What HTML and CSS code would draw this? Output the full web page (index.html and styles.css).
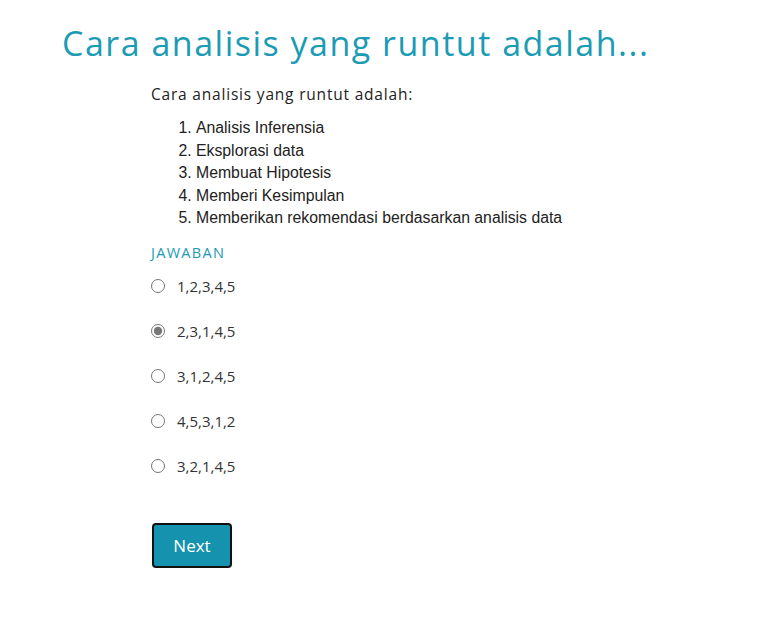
FILE: index.html
```html
<!DOCTYPE html>
<html lang="id">
<head>
<meta charset="utf-8">
<title>Soal</title>
<link rel="stylesheet" href="styles.css">
</head>
<body>
<main class="page">
  <h1 class="title">Cara analisis yang runtut adalah...</h1>
  <section class="question">
    <p class="prompt">Cara analisis yang runtut adalah:</p>
    <ol class="steps">
      <li>Analisis Inferensia</li>
      <li>Eksplorasi data</li>
      <li>Membuat Hipotesis</li>
      <li>Memberi Kesimpulan</li>
      <li>Memberikan rekomendasi berdasarkan analisis data</li>
    </ol>
    <div class="answer-label">JAWABAN</div>
    <form class="options">
      <label class="option"><input type="radio" name="a"><span>1,2,3,4,5</span></label>
      <label class="option"><input type="radio" name="a" checked><span>2,3,1,4,5</span></label>
      <label class="option"><input type="radio" name="a"><span>3,1,2,4,5</span></label>
      <label class="option"><input type="radio" name="a"><span>4,5,3,1,2</span></label>
      <label class="option"><input type="radio" name="a"><span>3,2,1,4,5</span></label>
    </form>
    <button class="next" type="button">Next</button>
  </section>
</main>
</body>
</html>
```

FILE: styles.css
```css
* { box-sizing: border-box; }
body {
  margin: 0;
  background: #fff;
  font-family: "Open Sans", "Noto Sans", sans-serif;
  color: #222;
}
.page {
  padding: 19px 0 0 62px;
}
.title {
  margin: 0;
  font-family: "Open Sans", sans-serif;
  font-weight: 500;
  font-size: 34px;
  line-height: 48px;
  color: #1b9bb4;
  letter-spacing: 1.5px;
}
.question {
  padding-left: 89px;
  padding-top: 16px;
}
.prompt {
  margin: 0;
  font-size: 15.5px;
  line-height: 22px;
  letter-spacing: 0.8px;
  color: #222;
}
.steps {
  margin: 12px 0 0 0;
  padding-left: 45px;
  font-family: "Liberation Sans", Arial, sans-serif;
  font-size: 15.8px;
  line-height: 22.5px;
  color: #222;
}
.answer-label {
  margin-top: 13px;
  font-size: 14.5px;
  line-height: 20px;
  letter-spacing: 1.3px;
  color: #1b9bb4;
}
.options {
  display: flex;
  flex-direction: column;
  gap: 23px;
  margin-top: 12px;
}
.option {
  display: flex;
  align-items: center;
  gap: 12px;
  height: 22px;
  font-size: 15px;
  color: #333;
}
.option input {
  margin: 0;
  width: 14px;
  height: 14px;
  accent-color: #777;
}
.next {
  margin-top: 46px;
  margin-left: 1px;
  width: 80px;
  height: 45px;
  background: #1592ad;
  color: #fff;
  border: 2px solid #111;
  border-radius: 4px;
  font-family: "Open Sans", sans-serif;
  font-size: 17px;
  cursor: pointer;
}
```
